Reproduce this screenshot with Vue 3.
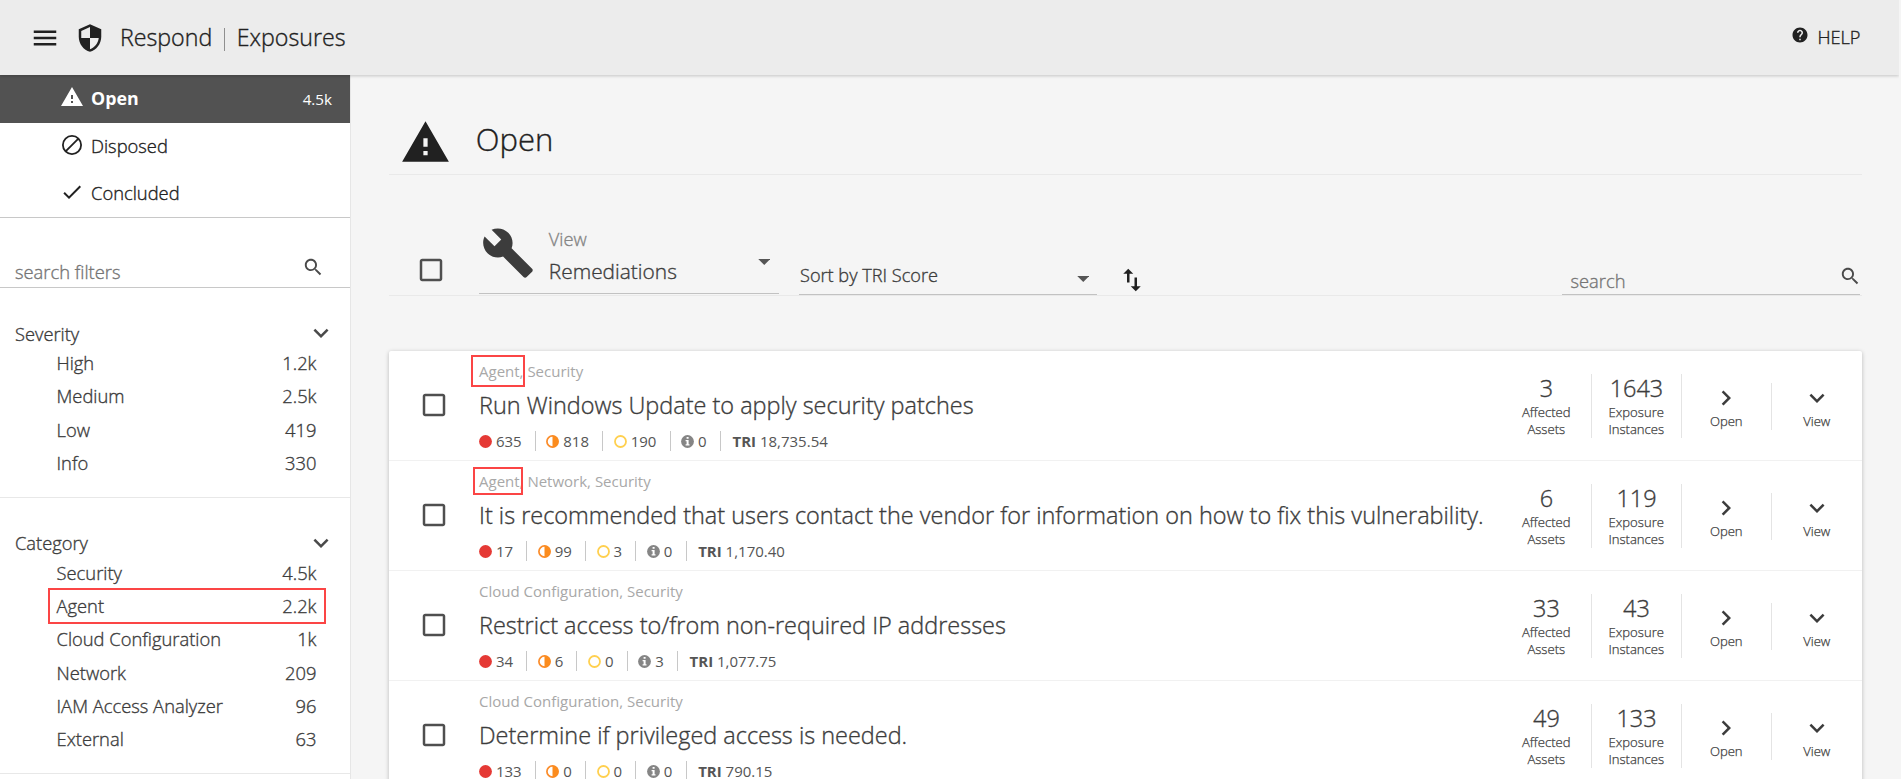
<script setup>
const paths = {
  menu: 'M3 18h18v-2H3v2zm0-5h18v-2H3v2zm0-7v2h18V6H3z',
  shield: 'M12 1L3 5v6c0 5.55 3.84 10.74 9 12 5.16-1.26 9-6.45 9-12V5l-9-4zm0 10.99h7c-.53 4.12-3.28 7.79-7 8.94V12H5V6.3l7-3.11v8.8z',
  warning: 'M1 21h22L12 2 1 21zm12-3h-2v-2h2v2zm0-4h-2v-4h2v4z',
  check: 'M9 16.2L4.8 12l-1.4 1.4L9 19 21 7l-1.4-1.4z',
  search: 'M15.5 14h-.79l-.28-.27C15.41 12.59 16 11.11 16 9.5 16 5.91 13.09 3 9.5 3S3 5.91 3 9.5 5.91 16 9.5 16c1.61 0 3.09-.59 4.23-1.57l.27.28v.79l5 4.99L20.49 19l-4.99-5zm-6 0C7.01 14 5 11.99 5 9.5S7.01 5 9.5 5 14 7.01 14 9.5 11.99 14 9.5 14z',
  down: 'M7.41 8.59L12 13.17l4.59-4.58L18 10l-6 6-6-6z',
  right: 'M8.59 16.59L13.17 12 8.59 7.41 10 6l6 6-6 6z',
  box: 'M19 5v14H5V5h14m0-2H5c-1.1 0-2 .9-2 2v14c0 1.1.9 2 2 2h14c1.1 0 2-.9 2-2V5c0-1.1-.9-2-2-2z',
  wrench: 'M22.7 19l-9.1-9.1c.9-2.3.4-5-1.5-6.9-2-2-5-2.4-7.4-1.3L9 6 6 9 1.6 4.7C.4 7.1.9 10.1 2.9 12.1c1.9 1.9 4.6 2.4 6.9 1.5l9.1 9.1c.4.4 1 .4 1.4 0l2.3-2.3c.5-.4.5-1.1.1-1.4z',
  swap: 'M16 17.01V10h-2v7.01h-3L15 21l4-3.99h-3zM9 3L5 6.99h3V14h2V6.99h3L9 3z',
  help: 'M12 2C6.48 2 2 6.48 2 12s4.48 10 10 10 10-4.48 10-10S17.52 2 12 2zm1 17h-2v-2h2v2zm2.07-7.75l-.9.92C13.45 12.9 13 13.5 13 15h-2v-.5c0-1.1.45-2.1 1.17-2.83l1.24-1.26c.37-.36.59-.86.59-1.41 0-1.1-.9-2-2-2s-2 .9-2 2H8c0-2.21 1.79-4 4-4s4 1.79 4 4c0 .88-.36 1.68-.93 2.25z',
}

const groups = [
  { name: 'Severity', items: [['High', '1.2k'], ['Medium', '2.5k'], ['Low', '419'], ['Info', '330']] },
  {
    name: 'Category',
    items: [['Security', '4.5k'], ['Agent', '2.2k'], ['Cloud Configuration', '1k'], ['Network', '209'], ['IAM Access Analyzer', '96'], ['External', '63']],
  },
]

const rows = [
  { tags: 'Agent, Security', mark: 'mark-wide', title: 'Run Windows Update to apply security patches', counts: [635, 818, 190, 0], tri: '18,735.54', assets: 3, instances: 1643 },
  { tags: 'Agent, Network, Security', mark: 'mark-slim', title: 'It is recommended that users contact the vendor for information on how to fix this vulnerability.', counts: [17, 99, 3, 0], tri: '1,170.40', assets: 6, instances: 119 },
  { tags: 'Cloud Configuration, Security', title: 'Restrict access to/from non-required IP addresses', counts: [34, 6, 0, 3], tri: '1,077.75', assets: 33, instances: 43 },
  { tags: 'Cloud Configuration, Security', title: 'Determine if privileged access is needed.', counts: [133, 0, 0, 0], tri: '790.15', assets: 49, instances: 133 },
]
</script>

<template>
  <div class="app">
    <header class="topbar">
      <svg class="i30 menu" viewBox="0 0 24 24"><path :d="paths.menu" /></svg>
      <svg class="i30 shield" viewBox="0 0 24 24"><path :d="paths.shield" /></svg>
      <div class="crumbs"><span>Respond</span><i class="bar"></i><span>Exposures</span></div>
      <div class="help">
        <svg viewBox="0 0 24 24"><path :d="paths.help" /></svg>
        <span>HELP</span>
      </div>
    </header>

    <div class="body">
      <aside class="side">
        <nav class="states">
          <a class="state active">
            <svg viewBox="0 0 24 24"><path :d="paths.warning" /></svg>
            <span>Open</span><em>4.5k</em>
          </a>
          <a class="state">
            <svg viewBox="0 0 24 24"><g fill="none" stroke="currentColor" stroke-width="1.8"><circle cx="12" cy="12" r="9.1" /><path d="M5.6 18.4L18.4 5.6" /></g></svg>
            <span>Disposed</span>
          </a>
          <a class="state">
            <svg viewBox="0 0 24 24"><path :d="paths.check" /></svg>
            <span>Concluded</span>
          </a>
        </nav>
        <div class="side-search">
          <span>search filters</span>
          <svg viewBox="0 0 24 24"><path :d="paths.search" /></svg>
        </div>
        <section v-for="g in groups" :key="g.name" class="group">
          <h3>{{ g.name }}<svg class="i30" viewBox="0 0 24 24"><path :d="paths.down" /></svg></h3>
          <div v-for="[label, n] in g.items" :key="label" class="item">
            <span>{{ label }}</span><span>{{ n }}</span>
            <i v-if="label === 'Agent'" class="mark mark-item"></i>
          </div>
        </section>
      </aside>

      <main class="main">
        <div class="heading">
          <svg viewBox="0 0 24 24"><path :d="paths.warning" /></svg>
          <h1>Open</h1>
        </div>

        <div class="tools">
          <svg class="i30 all" viewBox="0 0 24 24"><path :d="paths.box" /></svg>
          <div class="view">
            <svg class="wrench" viewBox="0 0 24 24"><path :d="paths.wrench" /></svg>
            <div class="view-text"><small>View</small><span>Remediations</span></div>
            <svg class="caret" viewBox="0 0 12 6"><path d="M0 0h12L6 6z" /></svg>
          </div>
          <div class="sort">
            <span>Sort by TRI Score</span>
            <svg class="caret" viewBox="0 0 12 6"><path d="M0 0h12L6 6z" /></svg>
          </div>
          <svg class="i30 swap" viewBox="0 0 24 24"><path :d="paths.swap" /></svg>
          <div class="search">
            <span>search</span>
            <svg viewBox="0 0 24 24"><path :d="paths.search" /></svg>
          </div>
        </div>

        <div class="list">
          <article v-for="r in rows" :key="r.title" class="row">
            <svg class="i30 pick" viewBox="0 0 24 24"><path :d="paths.box" /></svg>
            <div class="info">
              <div class="tags">{{ r.tags }}<i v-if="r.mark" class="mark" :class="r.mark"></i></div>
              <div class="title">{{ r.title }}</div>
              <div class="stats">
                <span class="stat"><svg viewBox="0 0 13 13"><circle cx="6.5" cy="6.5" r="6.4" fill="#e53935" /></svg>{{ r.counts[0] }}</span>
                <span class="stat"><svg viewBox="0 0 13 13"><circle cx="6.5" cy="6.5" r="5.6" fill="none" stroke="#fb8c2a" stroke-width="1.7" /><path d="M6.5 0.5a6 6 0 0 1 0 12z" fill="#fb8c1e" /></svg>{{ r.counts[1] }}</span>
                <span class="stat"><svg viewBox="0 0 13 13"><circle cx="6.5" cy="6.5" r="5.5" fill="none" stroke="#ffd04f" stroke-width="1.8" /></svg>{{ r.counts[2] }}</span>
                <span class="stat"><svg viewBox="0 0 13 13"><circle cx="6.5" cy="6.5" r="6.4" fill="#858585" /><path d="M5.6 2h2v1.8h-2zM4.6 5h3v4.3h.9v1.3H4.6V9.3h1V6.2h-1z" fill="#fff" /></svg>{{ r.counts[3] }}</span>
                <span class="tri"><b>TRI</b> {{ r.tri }}</span>
              </div>
            </div>
            <div class="cell"><strong>{{ r.assets }}</strong><span>Affected<br />Assets</span></div>
            <div class="cell"><strong>{{ r.instances }}</strong><span>Exposure<br />Instances</span></div>
            <div class="cell act"><svg class="i30" viewBox="0 0 24 24"><path :d="paths.right" /></svg><span>Open</span></div>
            <div class="cell act last"><svg class="i30" viewBox="0 0 24 24"><path :d="paths.down" /></svg><span>View</span></div>
          </article>
        </div>
      </main>
    </div>
  </div>
</template>

<style>
body { background: #f5f5f5; overflow: hidden; }
</style>

<style scoped>
* { box-sizing: border-box; }
.app {
  width: 1899px; height: 779px; overflow: hidden; display: flex; flex-direction: column;
  background: #f5f5f5; color: #3c3c3c; font-family: "Open Sans", sans-serif; font-weight: 300; font-size: 18.35px;
  -webkit-text-stroke: .35px currentColor;
}
svg { display: block; fill: currentColor; flex: none; }
.i30 { width: 30px; height: 30px; }

.topbar {
  height: 75px; flex: none; display: flex; align-items: center; background: #ececec; color: #212121;
  padding: 0 38.5px 0 30px; position: relative; box-shadow: 0 1px 3px rgba(0, 0, 0, .2);
}
.menu { margin-right: 15px; }
.crumbs { display: flex; align-items: center; margin: -2px 0 0 15px; font-size: 23.2px; line-height: 32px; }
.bar { width: 1.5px; height: 23px; margin: 5px 11.5px 0 11.5px; background: #8f8f8f; }
.help { margin-left: auto; display: flex; align-items: center; font-size: 18.2px; line-height: 24px; }
.help span { margin-top: -2px; }
.help svg { width: 18px; height: 18px; margin: 0 8px 6px 0; }

.body { flex: 1; display: flex; min-height: 0; }
.side { width: 351px; flex: none; background: #fff; border-right: 1px solid #e6e6e6; }
.states { height: 143px; border-bottom: 1px solid #c8c8c8; color: #212121; }
.state { display: flex; align-items: center; height: 47px; padding: 0 18px 0 60px; line-height: 24px; }
.state svg { width: 24px; height: 24px; margin: -4px 7px 0 0; }
.state span { margin-top: -2px; }
.state em { margin-left: auto; font-style: normal; font-weight: 400; font-size: 15.2px; }
.active { height: 48px; background: #525252; color: #fff; font-weight: 700; font-size: 17.8px; -webkit-text-stroke: 0; }
.side-search {
  height: 70px; display: flex; align-items: flex-end; justify-content: space-between; padding: 0 26px 2px 15px;
  border-bottom: 1px solid #c8c8c8; color: #757575; line-height: 26px;
}
.side-search svg { width: 22.5px; height: 22.5px; margin-bottom: 7px; color: #4a4a4a; }
.group { padding: 32.7px 33.5px 17.6px 56.5px; border-bottom: 1px solid #e8e8e8; }
.group h3 {
  display: flex; justify-content: space-between; align-items: center; height: 25px; margin: 0 -19.5px .4px -41.5px;
  font-size: 18.3px; font-weight: 300;
}
.group h3 svg { color: #4a4a4a; }
.item { position: relative; display: flex; justify-content: space-between; height: 33.25px; line-height: 33.25px; }

.mark { position: absolute; border: 2px solid #fb4545; }
.mark-item { left: -8.5px; top: -1.5px; width: 278px; height: 36px; }
.mark-wide { left: -8px; top: -6px; width: 54px; height: 32px; }
.mark-slim { left: -6px; top: -4px; width: 50px; height: 28px; }

.main { flex: 1; padding: 0 37px 0 38px; }
.heading { height: 100px; display: flex; align-items: center; padding: 35px 0 0 11px; border-bottom: 1px solid #e9e9e9; color: #212121; }
.heading svg { width: 51px; height: 51px; }
.heading h1 { margin: -6px 0 0 24.8px; font-size: 31px; line-height: 40px; font-weight: 300; }
.tools { height: 121px; display: flex; align-items: flex-end; border-bottom: 1px solid #e9e9e9; padding-left: 27px; }
.all { margin: 0 33px 10px 0; color: #4f4f4f; }
.view, .sort, .search { display: flex; border-bottom: 1px solid #c2c2c2; }
.view { width: 300px; height: 72px; margin-bottom: 1px; align-items: flex-start; }
.wrench { width: 54px; height: 54px; margin: 4px 13.8px 0 2px; }
.view-text { display: flex; flex-direction: column; flex: 1; font-size: 20.9px; }
.view-text small { font-size: 18.3px; line-height: 24px; margin-top: 5px; color: #858585; }
.view-text span { line-height: 30px; margin-top: 5px; }
.caret { width: 12.5px; height: 6px; color: #555; }
.view .caret { margin: 37px 9px 0 0; }
.sort { width: 298px; height: 32px; margin-left: 20px; justify-content: space-between; padding: 0 8px 0 1px; line-height: 24px; font-size: 18.15px; }
.sort .caret { margin-top: 12.5px; }
.swap { margin: 0 0 0 19.5px; color: #212121; }
.search { width: 298px; height: 32px; margin: 0 2px 0 auto; justify-content: space-between; align-items: flex-end; padding-left: 8.5px; color: #757575; line-height: 26px; }
.search svg { width: 22.5px; height: 22.5px; margin: 0 -1px 7px 0; color: #4a4a4a; }

.list { margin-top: 55px; background: #fff; border-radius: 2px; box-shadow: 0 1px 4px rgba(0, 0, 0, .25); }
.row { height: 110px; display: flex; border-bottom: 1px solid #f1f1f1; }
.pick { margin: 39px 30.5px 0 29.5px; color: #4f4f4f; }
.info { flex: 1; }
.tags { position: relative; width: max-content; margin-top: 10px; height: 20px; line-height: 20px; font-size: 15px; font-weight: 400; color: #a8a8a8; -webkit-text-stroke: 0; }
.title { height: 34px; line-height: 34px; margin-top: 7px; font-size: 23.46px; white-space: nowrap; }
.stats { display: flex; align-items: center; height: 20px; margin-top: 9px; font-size: 15px; font-weight: 400; color: #555; line-height: 20px; -webkit-text-stroke: 0; }
.stat { display: flex; align-items: center; height: 20px; padding-right: 13.2px; margin-right: 10.6px; border-right: 1px solid #c8c8c8; }
.stat svg { width: 13px; height: 13px; margin-right: 3.9px; }
.tri { margin-left: 1px; }
.cell {
  width: 90px; height: 64px; margin-top: 23px; border-right: 1px solid #e4e4e4; display: flex; flex-direction: column;
  align-items: center; text-align: center; font-size: 13.1px; line-height: 17px; -webkit-text-stroke: .25px currentColor;
}
.cell strong { font-weight: 300; font-size: 23.45px; line-height: 28px; margin-bottom: 2px; -webkit-text-stroke: .35px currentColor; }
.cell span { margin-left: -.5px; }
.act { height: 47px; margin-top: 32px; }
.act span { line-height: 17px; }
.act svg { margin-left: -1px; }
.act.last { border-right: 0; }
</style>
